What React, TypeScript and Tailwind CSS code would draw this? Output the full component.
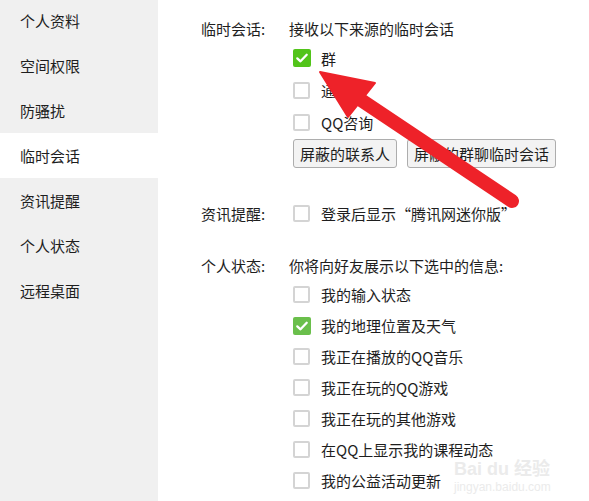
import clsx from 'clsx';

const menuItems = ['个人资料', '空间权限', '防骚扰', '临时会话', '资讯提醒', '个人状态', '远程桌面'];

const statusItems = [
    {label: '我的输入状态', checked: false},
    {label: '我的地理位置及天气', checked: true},
    {label: '我正在播放的QQ音乐', checked: false},
    {label: '我正在玩的QQ游戏', checked: false},
    {label: '我正在玩的其他游戏', checked: false},
    {label: '在QQ上显示我的课程动态', checked: false},
    {label: '我的公益活动更新', checked: false},
];

function Checkbox({checked, tone = 'bright'}: {checked?: boolean; tone?: 'bright' | 'soft'}) {
    if (checked) {
        return (
            <span
                className={clsx(
                    'flex h-[18px] w-[18px] shrink-0 items-center justify-center rounded-[2px]',
                    tone === 'bright' ? 'bg-[#52c41a]' : 'bg-[#6abf4b]',
                )}
            >
                <svg viewBox="0 0 16 16" className="h-[14px] w-[14px]">
                    <path d="M2.6 8.4 L6.3 11.8 L13.4 4.3" fill="none" stroke="#fff" strokeWidth="2.6" strokeLinecap="round" strokeLinejoin="round" />
                </svg>
            </span>
        );
    }
    return <span className="box-border h-[17px] w-[17px] shrink-0 rounded-[2px] border-2 border-[#d4d4d4] bg-white" />;
}

function CheckRow({label, checked, tone, h = 'h-[32px]'}: {label: string; checked?: boolean; tone?: 'bright' | 'soft'; h?: string}) {
    return (
        <div className={clsx('flex items-center', h)}>
            <div className="flex w-[32px] items-center pl-[4px]">
                <Checkbox checked={checked} tone={tone} />
            </div>
            <span>{label}</span>
        </div>
    );
}

export default function App() {
    return (
        <div
            className="relative flex min-h-screen w-full overflow-hidden bg-white text-[15px] leading-none text-[#1e1e1e]"
            style={{fontFamily: '"Noto Sans CJK SC", "Noto Sans", sans-serif'}}
        >
            <aside className="w-[158px] shrink-0 bg-[#f0f0f0]">
                <ul className="-mt-[2px]">
                    {menuItems.map(item => (
                        <li
                            key={item}
                            className={clsx(
                                'flex h-[45px] items-center pl-[20px]',
                                item === '临时会话' && 'bg-white',
                            )}
                        >
                            {item}
                        </li>
                    ))}
                </ul>
            </aside>

            <main className="flex-1 pt-[15px] pl-[43px]">
                <section className="grid grid-cols-[88px_1fr]">
                    <div className="flex h-[27px] items-center">临时会话:</div>
                    <div>
                        <div className="flex h-[27px] items-center">接收以下来源的临时会话</div>
                        <CheckRow label="群" checked />
                        <CheckRow label="通讯录" />
                        <CheckRow label="QQ咨询" />
                        <div className="mt-[1px] flex gap-[10px] pl-[4px]">
                            <button className="h-[29px] rounded-[3px] border border-[#adadad] bg-[#f3f3f3] px-[6px] text-[#1e1e1e]">
                                屏蔽的联系人
                            </button>
                            <button className="h-[29px] rounded-[3px] border border-[#adadad] bg-[#f3f3f3] px-[6px] text-[#1e1e1e]">
                                屏蔽的群聊临时会话
                            </button>
                        </div>
                    </div>
                </section>

                <section className="mt-[30px] grid grid-cols-[88px_1fr]">
                    <div className="flex h-[31px] items-center">资讯提醒:</div>
                    <CheckRow label="登录后显示“腾讯网迷你版”" h="h-[31px]" />
                </section>

                <section className="mt-[23px] grid grid-cols-[88px_1fr]">
                    <div className="flex h-[27px] items-center">个人状态:</div>
                    <div>
                        <div className="flex h-[27px] items-center">你将向好友展示以下选中的信息:</div>
                        {statusItems.map(item => (
                            <CheckRow key={item.label} label={item.label} checked={item.checked} tone="soft" h="h-[31px]" />
                        ))}
                    </div>
                </section>
            </main>

            {/* watermark */}
            <div className="pointer-events-none absolute top-[460px] left-[454px] flex flex-col items-start leading-none text-[#ebebeb]">
                <span className="text-[18px] font-bold" style={{fontFamily: '"Liberation Sans", "Noto Sans CJK SC", sans-serif'}}>
                    Bai du 经验
                </span>
                <span className="mt-[3px] text-[12px]" style={{fontFamily: '"Liberation Sans", sans-serif'}}>
                    jingyan.baidu.com
                </span>
            </div>

            {/* red arrow annotation */}
            <svg className="pointer-events-none absolute inset-0 h-full w-full" viewBox="0 0 589 501" preserveAspectRatio="xMinYMin meet">
                <line x1="358" y1="98" x2="512" y2="201" stroke="#ee2229" strokeWidth="14" strokeLinecap="round" />
                <polygon points="320,72 375,83 348,117" fill="#ee2229" stroke="#ee2229" strokeWidth="2" strokeLinejoin="round" />
            </svg>
        </div>
    );
}
